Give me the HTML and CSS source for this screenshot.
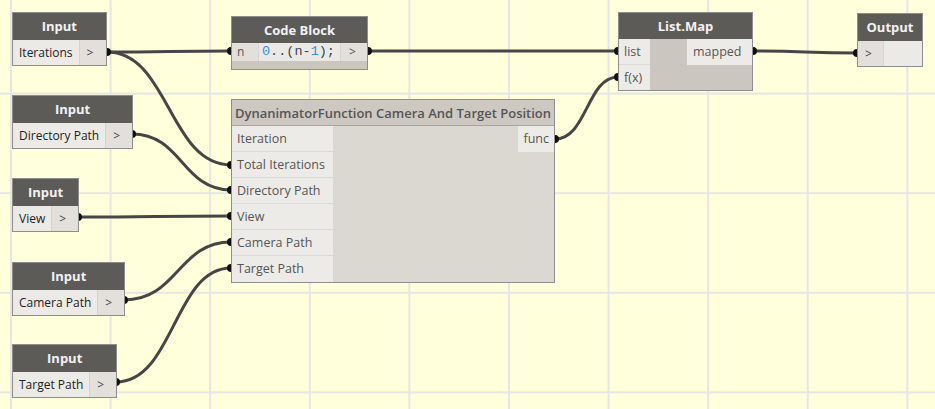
FILE: index.html
```html
<!DOCTYPE html>
<html lang="en">
<head>
    <meta charset="UTF-8">
    <title>Dynamo Graph</title>
    <link rel="stylesheet" href="styles.css">
</head>
<body>
    <div class="canvas">
        <svg class="wires" width="935" height="409" viewBox="0 0 935 409">
            <g class="wire">
                <path d="M107 52 C170 52, 168 51, 231 51"/>
                <path d="M107 52 C169 52, 169 165, 231 165"/>
                <path d="M132 134 C182 134, 182 190, 231 190"/>
                <path d="M78 217 C155 217, 155 216, 231 216"/>
                <path d="M124 300 C178 300, 178 242, 231 242"/>
                <path d="M116 382 C174 382, 174 268, 231 268"/>
                <path d="M368 51 C493 51, 493 51, 618 51"/>
                <path d="M555 139 C587 139, 587 77, 618 77"/>
                <path d="M753 51 C805 51, 805 53, 857 53"/>
            </g>
            <g class="dot">
                <circle cx="107" cy="52" r="4"/>
                <circle cx="231" cy="51" r="4"/>
                <circle cx="231" cy="165" r="4"/>
                <circle cx="132" cy="134" r="4"/>
                <circle cx="231" cy="190" r="4"/>
                <circle cx="78" cy="217" r="4"/>
                <circle cx="231" cy="216" r="4"/>
                <circle cx="124" cy="300" r="4"/>
                <circle cx="231" cy="242" r="4"/>
                <circle cx="116" cy="382" r="4"/>
                <circle cx="231" cy="268" r="4"/>
                <circle cx="368" cy="51" r="4"/>
                <circle cx="618" cy="51" r="4"/>
                <circle cx="555" cy="139" r="4"/>
                <circle cx="618" cy="77" r="4"/>
                <circle cx="753" cy="51" r="4"/>
                <circle cx="857" cy="53" r="4"/>
            </g>
        </svg>

        <!-- input nodes -->
        <div class="node input n-iter">
            <div class="node-head">Input</div>
            <div class="node-row"><span class="value">Iterations</span><span class="port">&gt;</span></div>
        </div>
        <div class="node input n-dir">
            <div class="node-head">Input</div>
            <div class="node-row"><span class="value">Directory Path</span><span class="port">&gt;</span></div>
        </div>
        <div class="node input n-view">
            <div class="node-head">Input</div>
            <div class="node-row"><span class="value">View</span><span class="port">&gt;</span></div>
        </div>
        <div class="node input n-cam">
            <div class="node-head">Input</div>
            <div class="node-row"><span class="value">Camera Path</span><span class="port">&gt;</span></div>
        </div>
        <div class="node input n-tgt">
            <div class="node-head">Input</div>
            <div class="node-row"><span class="value">Target Path</span><span class="port">&gt;</span></div>
        </div>

        <!-- code block -->
        <div class="node code n-code">
            <div class="node-head">Code Block</div>
            <div class="node-row">
                <span class="port">n</span>
                <span class="code-text"><span class="num">0</span>..(n-<span class="num">1</span>);</span>
                <span class="port">&gt;</span>
            </div>
            <div class="node-foot"></div>
        </div>

        <!-- custom node -->
        <div class="node custom n-dyn">
            <div class="node-head">DynanimatorFunction Camera And Target Position</div>
            <div class="node-body">
                <div class="ports-in">
                    <div class="port-in">Iteration</div>
                    <div class="port-in">Total Iterations</div>
                    <div class="port-in">Directory Path</div>
                    <div class="port-in">View</div>
                    <div class="port-in">Camera Path</div>
                    <div class="port-in">Target Path</div>
                </div>
                <div class="ports-out">
                    <div class="port-out">func</div>
                </div>
            </div>
        </div>

        <!-- list map -->
        <div class="node map n-map">
            <div class="node-head">List.Map</div>
            <div class="node-body">
                <div class="ports-in">
                    <div class="port-in">list</div>
                    <div class="port-in">f(x)</div>
                </div>
                <div class="ports-out">
                    <div class="port-out">mapped</div>
                </div>
            </div>
        </div>

        <!-- output -->
        <div class="node output n-out">
            <div class="node-head">Output</div>
            <div class="node-row"><span class="port">&gt;</span><span class="value"></span></div>
        </div>
    </div>
</body>
</html>
```

FILE: styles.css
```css
* {
    margin: 0;
    padding: 0;
    box-sizing: border-box;
}
body {
    background: #ffffdc;
    font-family: 'Open Sans', 'Segoe UI', sans-serif;
    overflow: hidden;
}
.canvas {
    position: relative;
    width: 935px;
    height: 409px;
    background-color: #ffffdc;
    background-image:
        linear-gradient(to right, #e6e6e4 2px, transparent 2px),
        linear-gradient(to bottom, #e6e6e4 2px, transparent 2px);
    background-size: 99.6px 99.6px;
    background-position: 10px -7px;
}
.wires {
    position: absolute;
    top: 0;
    left: 0;
}
.wire path {
    fill: none;
    stroke: #464646;
    stroke-width: 3;
}
.dot circle {
    fill: #111;
}

/* nodes */
.node {
    position: absolute;
    border: 1px solid #8e8e8e;
    background: #ebeae6;
    font-size: 12px;
    color: #333;
}
.node-head {
    background: #5d5b58;
    color: #f2f2f2;
    font-weight: 700;
    font-size: 13px;
    text-align: center;
    height: 26px;
    line-height: 26px;
}
.node-row {
    display: flex;
    height: 25px;
    line-height: 25px;
}
.node-row .value {
    flex: 1;
    padding: 0 6px;
    background: #ebeae6;
    color: #222;
    border-right: 1px solid #d6d3cf;
}
.node-row .port {
    width: 26px;
    padding-left: 7px;
    background: #e3e0dc;
    color: #444;
}

.n-iter { left: 12px; top: 12px; }
.n-dir { left: 12px; top: 95px; }
.n-view { left: 12px; top: 178px; }
.n-cam { left: 12px; top: 262px; }
.n-tgt { left: 12px; top: 344px; }

.input .node-head {
    height: 27px;
    line-height: 27px;
}

/* code block */
.n-code {
    left: 231px;
    top: 16px;
    width: 137px;
}
.code .node-row {
    height: 18px;
    line-height: 18px;
}
.code .node-row .port {
    width: 26px;
    padding-left: 5px;
    color: #555;
}
.code .node-row .port:last-child {
    padding-left: 8px;
}
.code-text {
    flex: 1;
    padding-left: 3px;
    font-family: 'Liberation Mono', 'DejaVu Sans Mono', monospace;
    font-size: 13.5px;
    color: #444;
    background: #ebe9e5;
    border-left: 1px solid #d6d3cf;
    border-right: 1px solid #d6d3cf;
}
.code-text .num {
    color: #3d8be0;
}
.node-foot {
    height: 8px;
    background: #cbc6be;
}

/* custom node */
.n-dyn {
    left: 231px;
    top: 99px;
    width: 324px;
    background: #dbd8d2;
}
.n-dyn::before,
.n-dyn::after {
    content: "";
    position: absolute;
    height: 8px;
    border: 1px solid #a6a6a6;
    border-bottom: none;
    background: #d6d3cd;
    z-index: -1;
}
.n-dyn::before {
    top: -7px;
    left: 3px;
    right: 8px;
}
.n-dyn::after {
    top: -4px;
    left: 1px;
    right: 4px;
}
.custom .node-head {
    background: #cdc9c2;
    color: #555;
    font-weight: 600;
    font-size: 13px;
    white-space: nowrap;
    border-bottom: 1px solid #a9a59e;
}
.node-body {
    display: flex;
    justify-content: space-between;
}
.ports-in {
    display: flex;
    flex-direction: column;
}
.port-in {
    height: 26px;
    line-height: 26px;
    padding: 0 3px 0 5px;
    font-size: 12.5px;
    white-space: nowrap;
    background: #ecebe8;
    border-bottom: 1px solid #dcdad6;
    color: #555;
}
.port-in:last-child {
    border-bottom: none;
}
.n-dyn .ports-in {
    width: 101px;
}
.port-out {
    height: 26px;
    line-height: 26px;
    padding: 0 5px;
    font-size: 12.5px;
    white-space: nowrap;
    background: #ecebe8;
    color: #555;
}

/* list.map */
.n-map {
    left: 618px;
    top: 12px;
    width: 135px;
    background: #cbc7c0;
}
.n-map .ports-in {
    width: 31px;
}
.n-map .port-in:last-child {
    height: 25px;
    line-height: 25px;
}
.n-map .port-out {
    width: 65px;
    padding-left: 6px;
}

/* output */
.n-out {
    left: 857px;
    top: 13px;
    width: 66px;
}
.output .node-head {
    height: 27px;
    line-height: 27px;
}
.output .node-row .port {
    border-right: 1px solid #d6d3cf;
}
.output .node-row .value {
    border-right: none;
}
```
